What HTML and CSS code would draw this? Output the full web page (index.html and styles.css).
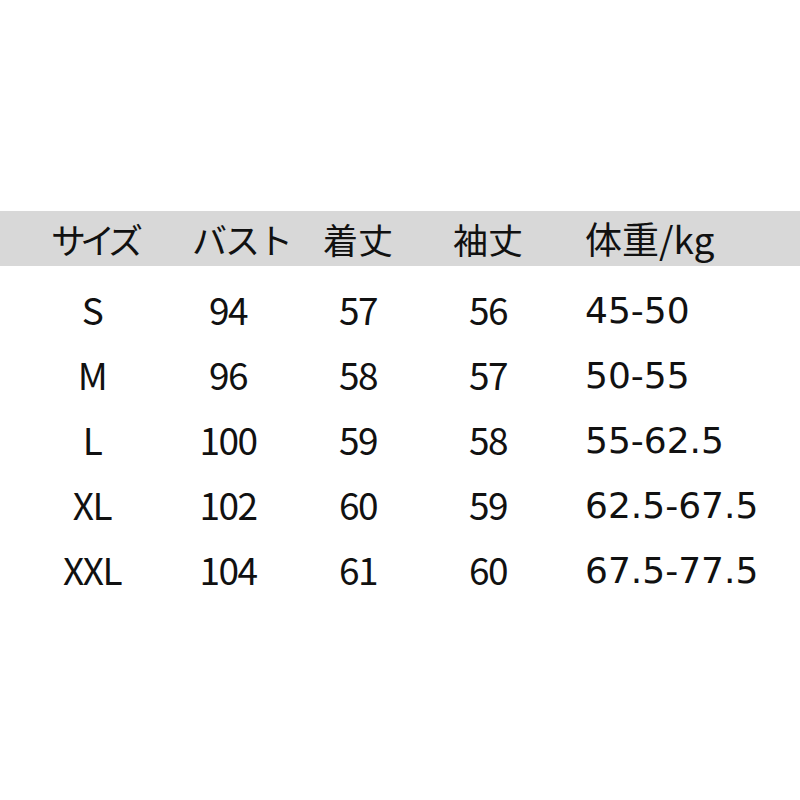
FILE: index.html
```html
<!DOCTYPE html>
<html lang="ja">
<head>
<meta charset="utf-8">
<title>サイズ表</title>
<link rel="stylesheet" href="styles.css">
</head>
<body>
<div class="sheet">
  <div class="row head">
    <div class="c c1 kana1">サイズ</div>
    <div class="c c2 kana2">バスト</div>
    <div class="c c3">着丈</div>
    <div class="c c4">袖丈</div>
    <div class="c c5 hw">体重/kg</div>
  </div>
  <div class="rows">
    <div class="row data"><div class="c c1">S</div><div class="c c2">94</div><div class="c c3">57</div><div class="c c4">56</div><div class="c c5 w">45-50</div></div>
    <div class="row data"><div class="c c1">M</div><div class="c c2">96</div><div class="c c3">58</div><div class="c c4">57</div><div class="c c5 w">50-55</div></div>
    <div class="row data"><div class="c c1">L</div><div class="c c2">100</div><div class="c c3">59</div><div class="c c4">58</div><div class="c c5 w">55-62.5</div></div>
    <div class="row data"><div class="c c1">XL</div><div class="c c2">102</div><div class="c c3">60</div><div class="c c4">59</div><div class="c c5 w">62.5-67.5</div></div>
    <div class="row data"><div class="c c1">XXL</div><div class="c c2">104</div><div class="c c3">61</div><div class="c c4">60</div><div class="c c5 w">67.5-77.5</div></div>
  </div>
</div>
</body>
</html>
```
FILE: styles.css
```css
html, body {
  margin: 0;
  padding: 0;
  background: #ffffff;
}
body {
  width: 800px;
  height: 800px;
  color: #111111;
  font-family: "Noto Sans CJK JP", "Noto Sans", sans-serif;
}
.sheet {
  padding-top: 211px;
}
.row {
  display: grid;
  align-items: center;
}
.head {
  grid-template-columns: 194px 86px 156px 104px 1fr;
  height: 55px;
  background: #d8d8d8;
  font-size: 35px;
}
.head .c5 {
  padding-left: 45px;
}
.rows {
  padding-top: 14px;
}
.data {
  grid-template-columns: 184px 88px 172px 88px 1fr;
  height: 65px;
  font-size: 37px;
}
.data .c {
  letter-spacing: -1.5px;
  padding-bottom: 6px;
}
.data .c5 {
  padding-left: 53px;
}
.c {
  text-align: center;
  white-space: nowrap;
  line-height: 1;
}
.c5 {
  text-align: left;
}
.kana1 {
  letter-spacing: -6px;
  text-indent: -6px;
}
.kana2 {
  letter-spacing: -2px;
  text-indent: -2px;
}
.hw {
  font-size: 37px;
}
.data .w {
  font-family: "DejaVu Sans", sans-serif;
  font-size: 36px;
  letter-spacing: 0;
  padding-bottom: 3px;
}
```
